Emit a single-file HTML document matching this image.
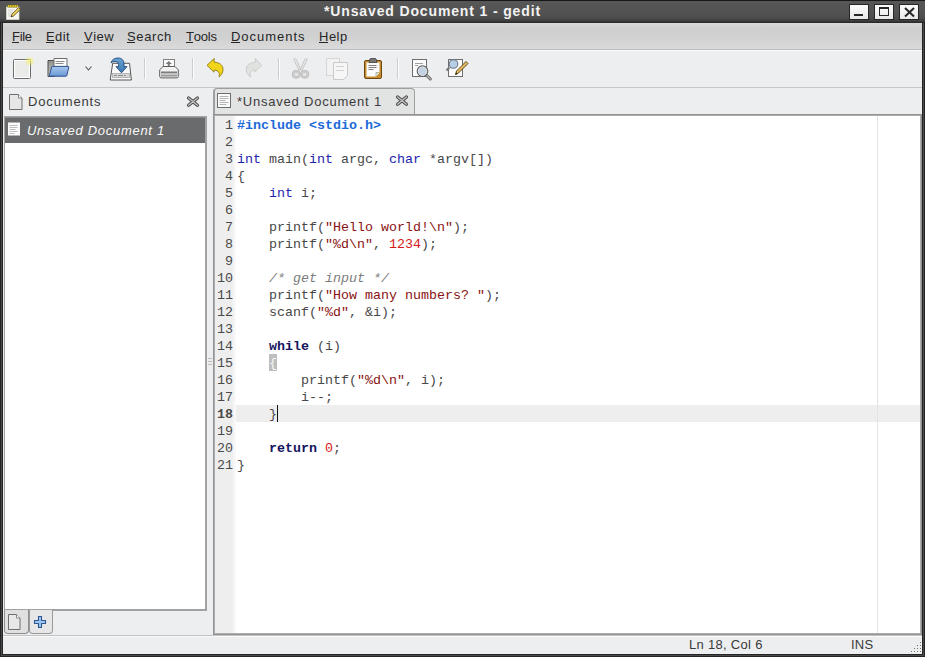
<!DOCTYPE html>
<html><head><meta charset="utf-8">
<style>
*{margin:0;padding:0;box-sizing:border-box}
html,body{width:925px;height:657px;overflow:hidden;background:#242424;font-family:"Liberation Sans",sans-serif;font-size:13px;color:#2e3436;position:relative}
.a{position:absolute}
svg{position:absolute;overflow:visible}
#title{left:0;top:0;width:925px;height:23px;background:linear-gradient(#575757,#545353 45%,#4e4d4d 75%,#3e3e3e 90%,#242424);border-top:1px solid #17171c}
#ttl{left:324px;top:3px;font-weight:bold;font-size:14px;color:#f2f2f2;letter-spacing:0.86px;white-space:nowrap;line-height:16px}
.wb{top:4px;width:20px;height:16px;background:linear-gradient(#fbfbfb,#e8e8e8);border:1px solid #262626}
#menu{left:3px;top:23px;width:919px;height:27px;background:linear-gradient(#d8d8d8,#cfcfcf 20%,#d2d2d2 60%,#dadada);border-bottom:1px solid #bdbdbd}
.mi{position:absolute;top:30px;color:#262626;line-height:13px;white-space:nowrap}
.mi u{text-decoration:none;position:relative}
.mi u:after{content:"";position:absolute;left:0;right:1px;top:13px;height:1px;background:#262626}
#tb{left:3px;top:50px;width:919px;height:38px;background:#edeeef;border-top:1px solid #fbfbfb;border-bottom:1px solid #c6c6c6}
.sep{position:absolute;top:58px;width:2px;height:21px;border-left:1px solid #cdcdcd;border-right:1px solid #fdfdfd}
#pane{left:3px;top:88px;width:919px;height:548px;background:#edeeef}
#code,#gut{font-family:"Liberation Mono",monospace;font-size:13.333px;line-height:17px;white-space:pre}
#code{left:237px;top:117px;color:#484848}
#gut{left:213px;top:117px;width:20px;color:#4a4a4a;text-align:right}
.pp{color:#1c6ad8;font-weight:bold}
.ty{color:#2323b0}
.kw{color:#161660;font-weight:bold}
.st{color:#8a1212}
.nu{color:#d41a1a}
.cm{color:#7c7c7c;font-style:italic}
.ui{position:absolute;white-space:nowrap;line-height:15px}
</style></head><body>
<!-- title bar -->
<div id="title" class="a"></div>
<svg style="left:0;top:0" width="30" height="23">
  <rect x="6.5" y="7" width="12.5" height="12.5" fill="#f8f8f4" stroke="#d8d8cc" stroke-width="0.8"/>
  <path d="M8 10h6M8 12h5M8 14h6M8 16h4" stroke="#c8c8c0" stroke-width="0.8"/>
  <path d="M7.5 6.2h10" stroke="#8a7a10" stroke-width="2.6"/>
  <path d="M8 6.2h1.2M10.2 6.2h1.2M12.4 6.2h1.2M14.6 6.2h1.2M16.8 6.2h1.2" stroke="#f2dc30" stroke-width="1.8"/>
  <path d="M11 16.8l.9-2.6 6.6-6.6 1.8 1.8-6.6 6.6z" fill="#e8cc60" stroke="#5a4a10" stroke-width="0.8"/>
  <path d="M11 16.8l.5-1.4 1 1z" fill="#111"/>
</svg>
<div id="ttl" class="a">*Unsaved Document 1 - gedit</div>
<div class="a wb" style="left:849px"><div class="a" style="left:4px;top:9px;width:9px;height:2px;background:#262626"></div></div>
<div class="a wb" style="left:874px"><div class="a" style="left:4px;top:2px;width:10px;height:9px;border:1px solid #262626;border-top-width:2px"></div></div>
<div class="a wb" style="left:899px"><svg style="left:4px;top:2px" width="11" height="11"><path d="M1 1L10 9.5M10 1L1 9.5" stroke="#262626" stroke-width="2"/></svg></div>

<div class="a" style="left:1px;top:23px;width:1px;height:633px;background:#4a4a4a"></div>
<div class="a" style="left:923px;top:23px;width:1px;height:633px;background:#4a4a4a"></div>
<div class="a" style="left:1px;top:655px;width:923px;height:1px;background:#4a4a4a"></div>
<!-- menu -->
<div id="menu" class="a"></div>
<div class="mi" style="left:12px;letter-spacing:-0.3px"><u>F</u>ile</div>
<div class="mi" style="left:46px;letter-spacing:0.4px"><u>E</u>dit</div>
<div class="mi" style="left:84px;letter-spacing:0.5px"><u>V</u>iew</div>
<div class="mi" style="left:127px;letter-spacing:0.62px"><u>S</u>earch</div>
<div class="mi" style="left:186px;letter-spacing:-0.2px"><u>T</u>ools</div>
<div class="mi" style="left:231px;letter-spacing:0.97px"><u>D</u>ocuments</div>
<div class="mi" style="left:319px;letter-spacing:0.5px"><u>H</u>elp</div>

<!-- toolbar -->
<div id="tb" class="a"></div>
<div class="sep" style="left:144px"></div>
<div class="sep" style="left:192px"></div>
<div class="sep" style="left:278px"></div>
<div class="sep" style="left:397px"></div>

<!-- new -->
<svg style="left:8px;top:54px" width="28" height="28">
  <defs><radialGradient id="glow" cx="22" cy="7" r="6" gradientUnits="userSpaceOnUse"><stop offset="0" stop-color="#f4f060"/><stop offset="1" stop-color="#f4f060" stop-opacity="0"/></radialGradient></defs>
  <rect x="5.5" y="5.5" width="17" height="19" rx="1" fill="#ebebea" stroke="#6c6c6c"/>
  <rect x="6.5" y="6.5" width="15" height="17" fill="none" stroke="#fff"/>
  <circle cx="21" cy="8" r="5" fill="url(#glow)" opacity="0.8"/>
</svg>
<!-- open -->
<svg style="left:44px;top:54px" width="28" height="28">
  <defs><linearGradient id="fb" x1="0" y1="0" x2="0" y2="1"><stop offset="0" stop-color="#a8c6ee"/><stop offset="1" stop-color="#6a9ad6"/></linearGradient>
  <linearGradient id="fk" x1="0" y1="0" x2="0" y2="1"><stop offset="0" stop-color="#8e8e8a"/><stop offset="1" stop-color="#d0d0cc"/></linearGradient></defs>
  <path d="M4 6.5h5.5l1 1.5v14.5h-6.5z" fill="url(#fk)" stroke="#4e4e4e" stroke-linejoin="round"/>
  <path d="M10 4.5h13v9h-13z" fill="#fcfcfc" stroke="#6e6e6e" stroke-linejoin="round"/>
  <path d="M11.5 7.5h9M11.5 9.5h8" stroke="#8a8a8a"/>
  <path d="M8.6 12.4h15.6c.5 0 .7.3.6.7l-2 8.5c-.1.4-.4.6-.8.6h-16c-.5 0-.7-.3-.6-.7l2.2-8.5c.1-.4.5-.6 1-.6z" fill="url(#fb)" stroke="#2c4e8c" stroke-width="1"/>
</svg>
<svg style="left:84px;top:64px" width="10" height="10"><path d="M1.5 2.5l3 3.5 3-3.5" fill="none" stroke="#555" stroke-width="1.1"/></svg>
<!-- save -->
<svg style="left:106px;top:54px" width="28" height="28">
  <defs><linearGradient id="sg" x1="0" y1="0" x2="0" y2="1"><stop offset="0" stop-color="#6aa4d4"/><stop offset="1" stop-color="#3a78b0"/></linearGradient></defs>
  <path d="M6.7 9.3h16.8l1.9 16.7h-21.2z" fill="#fafafa" stroke="#555" stroke-width="1"/>
  <rect x="6.5" y="19.5" width="17" height="4" fill="#d8d8d8" stroke="#a8a8a8" stroke-width="0.8"/>
  <path d="M8 21.5h3M12 21.5h5M18 21.5h2" stroke="#8a8a8a" stroke-width="1"/>
  <path d="M5 9C5.5 5.5 9 4 12 4C16 4 18 6.5 18 10V12.6H21L15.5 18.8L10 12.6H12.6V10.5C12.6 8.5 11 7.5 9 7.5C7 7.5 5.5 8.5 5 9Z" fill="url(#sg)" stroke="#1e4a78" stroke-width="0.9" stroke-linejoin="round"/>
</svg>
<!-- print -->
<svg style="left:155px;top:54px" width="28" height="28">
  <rect x="8.5" y="5.5" width="11" height="9" fill="#fafafa" stroke="#808080"/>
  <path d="M13.8 7l-3.2 3h2.2v2.5h2v-2.5h2.2z" fill="#7a7a7a"/>
  <path d="M8 12.5h12l3.3 3.3v6.7c0 .8-.6 1.4-1.4 1.4h-15.8c-.8 0-1.4-.6-1.4-1.4v-6.7z" fill="#f2f2f2" stroke="#5e5e5e"/>
  <rect x="6" y="17.5" width="16" height="2" fill="#7c7c7c"/>
  <rect x="6" y="19.5" width="16" height="1.5" fill="#c8c8c8"/>
  <rect x="6" y="21" width="16" height="1.6" fill="#9a9a9a"/>
</svg>
<!-- undo -->
<svg style="left:201px;top:54px" width="28" height="28">
  <path d="M6 11.3L13.2 4.5V8.2C18.5 8.5 22 11 22 15.5C22 18.5 20.5 21 18 23C19 19.5 18 16.3 13 16V18.2Z" fill="#f2d41a" stroke="#8c7a12" stroke-width="0.9" stroke-linejoin="round"/>
</svg>
<!-- redo -->
<svg style="left:239px;top:54px" width="28" height="28">
  <path d="M22.6 11.3L16.4 4.5V8.2C11 8.5 7.3 11 7.3 15.5C7.3 18.5 9 21 11.5 23C10.5 19.5 11.5 16.3 16 16V17.8Z" fill="#dfe2df" stroke="#c6c9c6" stroke-width="0.9" stroke-linejoin="round"/>
</svg>
<!-- cut -->
<svg style="left:286px;top:54px" width="28" height="28">
  <path d="M8.5 4.5c1 0 1.5.5 2 1.5l4.5 10h-2.2l-4.8-10c-.3-.8 0-1.5.5-1.5zM20.5 4.5c-1 0-1.5.5-2 1.5l-4.5 10h2.2l4.8-10c.3-.8 0-1.5-.5-1.5z" fill="#e8e8e8" stroke="#c6c6c6" stroke-width="1"/>
  <path d="M13.5 17.5c-1.5-1-5-1.5-6.5 0c-1 1-1 4 0 5.5c1.5 1.5 5 1.5 6.5 0c.8-1 .8-4.5 0-5.5zM15.5 17.5c1.5-1 5-1.5 6.5 0c1 1 1 4 0 5.5c-1.5 1.5-5 1.5-6.5 0c-.8-1-.8-4.5 0-5.5z" fill="#cdcdcd" stroke="#bcbcbc" stroke-width="1"/>
  <path d="M9 19.5h3v2h-3zM17 19.5h3v2h-3z" fill="#ececec"/>
</svg>
<!-- copy -->
<svg style="left:322px;top:54px" width="28" height="28">
  <rect x="4.5" y="4.5" width="13" height="17" fill="#f2f2f2" stroke="#d6d6d6"/>
  <path d="M11.5 8.5h14v13l-4 4h-10z" fill="#f6f6f6" stroke="#cacaca"/>
  <path d="M14 12.5h8M14 16.5h8" stroke="#d2d2d2"/>
</svg>
<!-- paste -->
<svg style="left:358px;top:54px" width="28" height="28">
  <rect x="6.5" y="6.5" width="17" height="18" rx="1.5" fill="#c88a2a" stroke="#6a4810"/>
  <path d="M8.5 8.5h13v10l-3.5 4h-9.5z" fill="#fbfbfb" stroke="#d8c8a0" stroke-width="0.6"/>
  <path d="M18 22.5v-4h3.5" fill="#e4e8dc" stroke="#9a9a80" stroke-width="0.7"/>
  <path d="M10.5 11.5h8M10.5 13.5h8M10.5 15.5h5" stroke="#808080"/>
  <path d="M11 8.5h8l-.8-3.2c-.2-.6-.6-.8-1.2-.8h-4c-.6 0-1 .2-1.2.8z" fill="#767676" stroke="#404040" stroke-width="0.8"/>
</svg>
<!-- find -->
<svg style="left:407px;top:54px" width="28" height="28">
  <rect x="5.5" y="5.5" width="14" height="17" fill="#fbfbfb" stroke="#6e6e6e"/>
  <path d="M8 9.5h8M8 11.5h3" stroke="#a0a0a0"/>
  <path d="M19.8 21.5l3.5 3.5" stroke="#5e5e5e" stroke-width="3" stroke-linecap="round"/>
  <path d="M19.8 21.5l3.5 3.5" stroke="#b8b8b8" stroke-width="1.2" stroke-linecap="round"/>
  <circle cx="15.5" cy="17.2" r="5.3" fill="#c4d2e6" stroke="#5a5a5a" stroke-width="1.1"/>
  <circle cx="15.5" cy="17.2" r="4.2" fill="none" stroke="#dcdcdc" stroke-width="1"/>
</svg>
<!-- replace -->
<svg style="left:443px;top:54px" width="28" height="28">
  <rect x="5.5" y="5.5" width="14" height="17" fill="#fbfbfb" stroke="#6e6e6e"/>
  <path d="M6.5 13.5l-3 3" stroke="#7a7a7a" stroke-width="2.4"/>
  <circle cx="10.5" cy="10" r="4.3" fill="#b8cce4" stroke="#6a7a8a" stroke-width="1.1"/>
  <path d="M12.5 20.5l1-3.5 9.5-9.5 2 2-9.5 9.5z" fill="#e4b860" stroke="#4e3e12" stroke-width="0.9"/>
  <path d="M12.5 20.5l.6-2 1.4 1.4z" fill="#111"/>
</svg>

<!-- pane background -->
<div id="pane" class="a"></div>

<!-- side panel header -->
<svg style="left:4px;top:88px" width="24" height="26">
  <path d="M5.5 6.5h9l3.5 3.5v11.5h-12.5z" fill="#e6e6e6" stroke="#6e6e6e"/>
  <path d="M14.5 6.5v3.5h3.5" fill="#fff" stroke="#6e6e6e" stroke-width="0.8"/>
</svg>
<div class="ui" style="left:28px;top:94px;color:#3a3a3a;letter-spacing:0.85px">Documents</div>
<svg style="left:185px;top:94px" width="16" height="16">
  <path d="M3.6 4l8.8 7.2M12.4 4l-8.8 7.2" stroke="#4e4e4e" stroke-width="3.4" stroke-linecap="round"/>
  <path d="M3.6 4l8.8 7.2M12.4 4l-8.8 7.2" stroke="#c4c4c4" stroke-width="1.3" stroke-linecap="round"/>
</svg>

<!-- side list -->
<div class="a" style="left:4px;top:116px;width:203px;height:495px;background:#fff;border:1px solid #a2a2a2;border-bottom-width:2px;border-right-width:2px"></div>
<div class="a" style="left:5px;top:117px;width:200px;height:26px;background:#6a6b6c;border-top:1px solid #8a8a8a"></div>
<svg style="left:5px;top:116px" width="20" height="26">
  <rect x="3" y="6.5" width="12" height="13" fill="#fbfbfb"/>
  <path d="M4.5 9.5h8M4.5 11.5h8M4.5 13.5h6M4.5 15.5h8M4.5 17.5h5" stroke="#b0b0b0" stroke-width="0.8"/>
</svg>
<div class="ui" style="left:27px;top:123px;color:#fafafa;font-style:italic;letter-spacing:0.72px">Unsaved Document 1</div>

<!-- side bottom tabs -->
<div class="a" style="left:4px;top:610px;width:25px;height:24px;background:#e0e0e0;border:1px solid #8e8e8e;border-top:none;border-radius:0 0 4px 4px"></div>
<div class="a" style="left:29px;top:610px;width:24px;height:24px;background:#e6e6e6;border:1px solid #9a9a9a;border-top:none;border-radius:0 0 4px 4px"></div>
<svg style="left:4px;top:610px" width="24" height="24">
  <path d="M4.5 4.5h8l3.5 3.5v11.5h-11.5z" fill="#e8e8e8" stroke="#6e6e6e"/>
  <path d="M12.5 4.5v3.5h3.5" fill="#fff" stroke="#6e6e6e" stroke-width="0.8"/>
</svg>
<svg style="left:29px;top:610px" width="24" height="24">
  <path d="M9.5 6.5h3v4h4v3h-4v4h-3v-4h-4v-3h4z" fill="#9cc4f0" stroke="#2c5690" stroke-width="1.1" stroke-linejoin="round"/>
</svg>

<!-- editor tab -->
<div class="a" style="left:213px;top:88px;width:202px;height:28px;background:#e2e3e3;border:1px solid #9e9e9e;border-left:2px solid #a0a0a0;border-bottom:none;border-radius:4px 4px 0 0"></div>
<svg style="left:214px;top:88px" width="22" height="26">
  <rect x="3.5" y="5.5" width="13" height="14" fill="#fbfbfb" stroke="#6e6e6e"/>
  <path d="M5.5 8.5h9M5.5 10.5h9M5.5 12.5h6M5.5 14.5h9M5.5 16.5h7" stroke="#a4a4a4" stroke-width="0.8"/>
</svg>
<div class="ui" style="left:237px;top:94px;color:#3a3a3a;letter-spacing:0.78px">*Unsaved Document 1</div>
<svg style="left:394px;top:93px" width="16" height="16">
  <path d="M3.6 4l8.8 7.2M12.4 4l-8.8 7.2" stroke="#4e4e4e" stroke-width="3.4" stroke-linecap="round"/>
  <path d="M3.6 4l8.8 7.2M12.4 4l-8.8 7.2" stroke="#c4c4c4" stroke-width="1.3" stroke-linecap="round"/>
</svg>

<!-- pane handle grip -->
<div class="a" style="left:208px;top:358px;width:4px;height:1px;background:#bcbcbc"></div>
<div class="a" style="left:208px;top:361px;width:4px;height:1px;background:#bcbcbc"></div>
<div class="a" style="left:208px;top:364px;width:4px;height:1px;background:#bcbcbc"></div>

<!-- editor -->
<div class="a" style="left:213px;top:114px;width:709px;height:521px;background:#fff;border:1px solid #929292;box-shadow:inset 0 0 0 1px #aeaeae"></div>
<div class="a" style="left:215px;top:116px;width:21px;height:517px;background:linear-gradient(90deg,#eeeeee 80%,#fbfbfb)"></div>
<div class="a" style="left:236px;top:405px;width:684px;height:17px;background:#eeeeee"></div>
<div class="a" style="left:877px;top:116px;width:1px;height:517px;background:#e4e4e4"></div>
<div class="a" style="left:269px;top:354px;width:8px;height:17px;background:#bebebe"></div>
<div id="gut" class="a">1
2
3
4
5
6
7
8
9
10
11
12
13
14
15
16
17
<b>18</b>
19
20
21</div>
<div id="code" class="a"><span class="pp">#include &lt;stdio.h&gt;</span>

<span class="ty">int</span> main(<span class="ty">int</span> argc, <span class="ty">char</span> *argv[])
{
    <span class="ty">int</span> i;

    printf(<span class="st">"Hello world!\n"</span>);
    printf(<span class="st">"%d\n"</span>, <span class="nu">1234</span>);

    <span class="cm">/* get input */</span>
    printf(<span class="st">"How many numbers? "</span>);
    scanf(<span class="st">"%d"</span>, &amp;i);

    <span class="kw">while</span> (i)
    <span style="color:#f8f8f8">{</span>
        printf(<span class="st">"%d\n"</span>, i);
        i--;
    }

    <span class="kw">return</span> <span class="nu">0</span>;
}</div>
<div class="a" style="left:277px;top:405px;width:1px;height:17px;background:#111"></div>

<!-- status bar -->
<div class="a" style="left:3px;top:635px;width:919px;height:19px;background:#edeeef;border-top:1px solid #c2c2c2;box-shadow:inset 0 1px 0 #fafafa"></div>
<div class="ui" style="left:689px;top:637px;color:#3a3a3a;letter-spacing:0.3px">Ln 18, Col 6</div>
<div class="ui" style="left:851px;top:637px;color:#3a3a3a;letter-spacing:0.2px">INS</div>
<svg style="left:904px;top:638px" width="18" height="16"><path d="M16 4h1M16 7h1M13 7h1M16 10h1M13 10h1M10 10h1M16 13h1M13 13h1M10 13h1M7 13h1" stroke="#fbfbfb" stroke-width="1" transform="translate(1,1)"/><path d="M16 4h1M16 7h1M13 7h1M16 10h1M13 10h1M10 10h1M16 13h1M13 13h1M10 13h1M7 13h1" stroke="#6e6e6e" stroke-width="1" transform="translate(0,0.5)"/></svg>
</body></html>
